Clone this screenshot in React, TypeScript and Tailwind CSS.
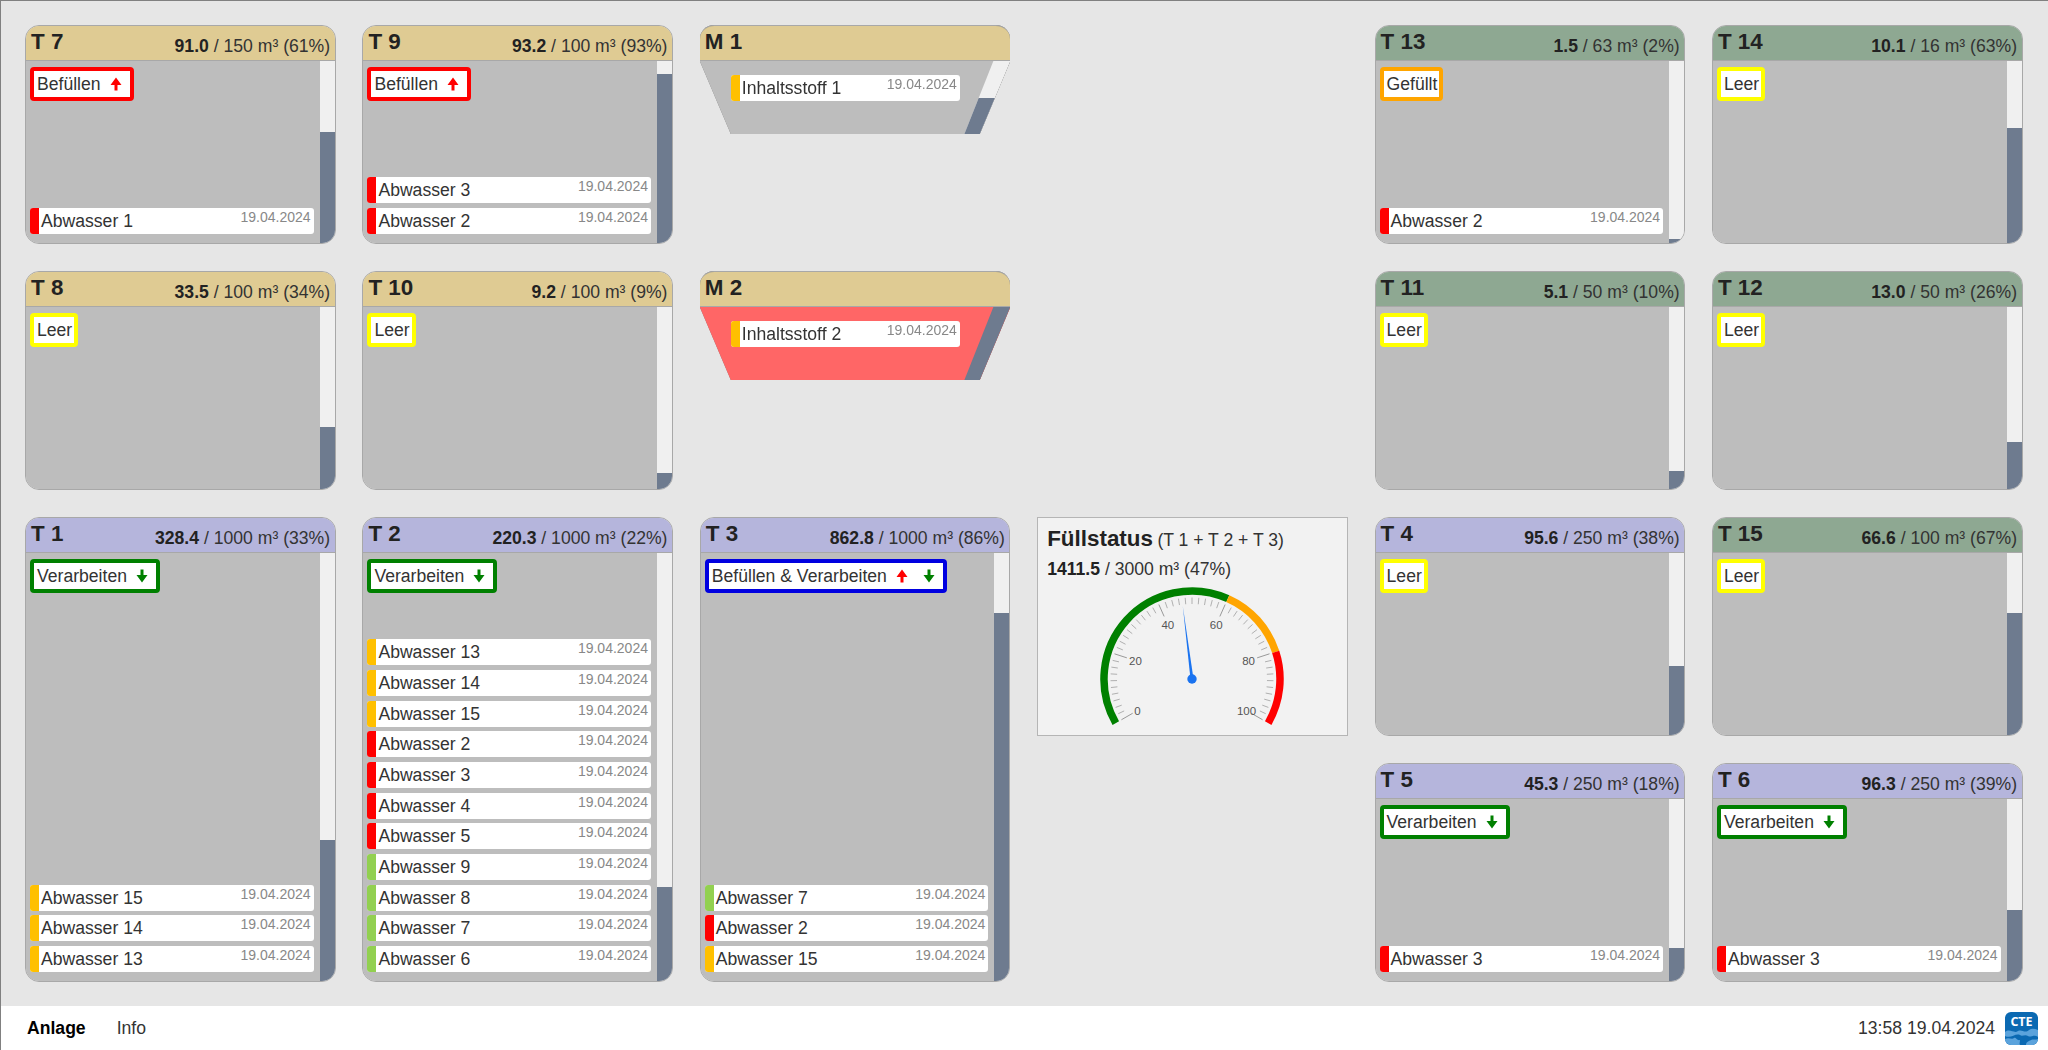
import type { ReactNode } from 'react';

const RED = 'bg-[#ff0000]';
const ORANGE = 'bg-[#ffc000]';
const GREEN = 'bg-[#92d050]';

type Item = { name: string; color: string };

type Tank = {
  name: string;
  value: string;
  max: number;
  percent: number;
  head: string;
  place: string;
  status: string;
  border: string;
  up?: boolean;
  down?: boolean;
  items?: Item[];
};

const HEAD_TAN = 'bg-[#dfcb93]';
const HEAD_GREEN = 'bg-[#8ea892]';
const HEAD_PURPLE = 'bg-[#b5b5dc]';

const BORDER_RED = 'border-[#ff0000]';
const BORDER_YELLOW = 'border-[#ffff00]';
const BORDER_GREEN = 'border-[#008000]';
const BORDER_BLUE = 'border-[#0000e0]';
const BORDER_ORANGE = 'border-[#ffa500]';

const tanks: Tank[] = [
  { name: 'T 7', value: '91.0', max: 150, percent: 61, head: HEAD_TAN, place: 'col-start-1 row-start-1', status: 'Befüllen', border: BORDER_RED, up: true, items: [{ name: 'Abwasser 1', color: RED }] },
  { name: 'T 9', value: '93.2', max: 100, percent: 93, head: HEAD_TAN, place: 'col-start-2 row-start-1', status: 'Befüllen', border: BORDER_RED, up: true, items: [{ name: 'Abwasser 3', color: RED }, { name: 'Abwasser 2', color: RED }] },
  { name: 'T 13', value: '1.5', max: 63, percent: 2, head: HEAD_GREEN, place: 'col-start-5 row-start-1', status: 'Gefüllt', border: BORDER_ORANGE, items: [{ name: 'Abwasser 2', color: RED }] },
  { name: 'T 14', value: '10.1', max: 16, percent: 63, head: HEAD_GREEN, place: 'col-start-6 row-start-1', status: 'Leer', border: BORDER_YELLOW },
  { name: 'T 8', value: '33.5', max: 100, percent: 34, head: HEAD_TAN, place: 'col-start-1 row-start-2', status: 'Leer', border: BORDER_YELLOW },
  { name: 'T 10', value: '9.2', max: 100, percent: 9, head: HEAD_TAN, place: 'col-start-2 row-start-2', status: 'Leer', border: BORDER_YELLOW },
  { name: 'T 11', value: '5.1', max: 50, percent: 10, head: HEAD_GREEN, place: 'col-start-5 row-start-2', status: 'Leer', border: BORDER_YELLOW },
  { name: 'T 12', value: '13.0', max: 50, percent: 26, head: HEAD_GREEN, place: 'col-start-6 row-start-2', status: 'Leer', border: BORDER_YELLOW },
  { name: 'T 1', value: '328.4', max: 1000, percent: 33, head: HEAD_PURPLE, place: 'col-start-1 row-start-3 row-span-2', status: 'Verarbeiten', border: BORDER_GREEN, down: true, items: [{ name: 'Abwasser 15', color: ORANGE }, { name: 'Abwasser 14', color: ORANGE }, { name: 'Abwasser 13', color: ORANGE }] },
  {
    name: 'T 2', value: '220.3', max: 1000, percent: 22, head: HEAD_PURPLE, place: 'col-start-2 row-start-3 row-span-2', status: 'Verarbeiten', border: BORDER_GREEN, down: true,
    items: [
      { name: 'Abwasser 13', color: ORANGE },
      { name: 'Abwasser 14', color: ORANGE },
      { name: 'Abwasser 15', color: ORANGE },
      { name: 'Abwasser 2', color: RED },
      { name: 'Abwasser 3', color: RED },
      { name: 'Abwasser 4', color: RED },
      { name: 'Abwasser 5', color: RED },
      { name: 'Abwasser 9', color: GREEN },
      { name: 'Abwasser 8', color: GREEN },
      { name: 'Abwasser 7', color: GREEN },
      { name: 'Abwasser 6', color: GREEN },
    ],
  },
  { name: 'T 3', value: '862.8', max: 1000, percent: 86, head: HEAD_PURPLE, place: 'col-start-3 row-start-3 row-span-2', status: 'Befüllen & Verarbeiten', border: BORDER_BLUE, up: true, down: true, items: [{ name: 'Abwasser 7', color: GREEN }, { name: 'Abwasser 2', color: RED }, { name: 'Abwasser 15', color: ORANGE }] },
  { name: 'T 4', value: '95.6', max: 250, percent: 38, head: HEAD_PURPLE, place: 'col-start-5 row-start-3', status: 'Leer', border: BORDER_YELLOW },
  { name: 'T 15', value: '66.6', max: 100, percent: 67, head: HEAD_GREEN, place: 'col-start-6 row-start-3', status: 'Leer', border: BORDER_YELLOW },
  { name: 'T 5', value: '45.3', max: 250, percent: 18, head: HEAD_PURPLE, place: 'col-start-5 row-start-4', status: 'Verarbeiten', border: BORDER_GREEN, down: true, items: [{ name: 'Abwasser 3', color: RED }] },
  { name: 'T 6', value: '96.3', max: 250, percent: 39, head: HEAD_PURPLE, place: 'col-start-6 row-start-4', status: 'Verarbeiten', border: BORDER_GREEN, down: true, items: [{ name: 'Abwasser 3', color: RED }] },
];

function Arrow({ dir, className = '' }: { dir: 'up' | 'down'; className?: string }) {
  return (
    <svg width="12" height="14" viewBox="0 0 12 14" className={`${dir === 'down' ? 'rotate-180' : ''} ${className}`}>
      <path d="M6 0.5 L11.5 8 H7.5 V13.5 H4.5 V8 H0.5 Z" fill={dir === 'up' ? '#ff0000' : '#008000'} />
    </svg>
  );
}

function ItemRow({ item, full }: { item: Item; full?: boolean }) {
  return (
    <div className={`flex h-[26px] shrink-0 overflow-hidden rounded-[3px] bg-white ${full ? 'w-[229px]' : ''}`}>
      <div className={`w-[9px] shrink-0 ${item.color}`} />
      <span className="ml-[2px] flex-1 text-[17.6px] leading-[26px] text-[#333]">{item.name}</span>
      <span className="mr-[3px] text-[14px] leading-[19px] text-[#888]">19.04.2024</span>
    </div>
  );
}

function Head({ title, head, children }: { title: string; head: string; children?: ReactNode }) {
  return (
    <div className={`flex h-[35px] shrink-0 items-start justify-between border-b border-b-[#a8a8a8] pl-[5px] pr-[4.5px] ${head}`}>
      <span className="text-[22.4px] font-bold leading-[32px] text-[#222]">{title}</span>
      {children}
    </div>
  );
}

function TankCard({ tank }: { tank: Tank }) {
  return (
    <div className={`flex flex-col overflow-hidden rounded-[14px] border border-[#a8a8a8] ${tank.place}`}>
      <Head title={tank.name} head={tank.head}>
        <span className="mt-[8px] text-[17.6px] leading-[24px] text-[#333]">
          <b className="text-[#222]">{tank.value}</b> / {tank.max} m³ ({tank.percent}%)
        </span>
      </Head>
      <div className="flex min-h-0 flex-1 bg-[#bdbdbd]">
        <div className="flex min-w-0 flex-1 flex-col justify-between pb-[9px] pl-[4px] pr-[6px] pt-[6px]">
          <div className={`flex h-[34px] items-center gap-[9px] self-start rounded-[4px] border-[4px] bg-white pl-[3px] text-[17.6px] text-[#333] ${tank.up || tank.down ? 'pr-[8px]' : 'pr-[2px]'} ${tank.border}`}>
            <span>{tank.status}</span>
            {tank.up && <Arrow dir="up" />}
            {tank.down && <Arrow dir="down" className={tank.up ? 'ml-[6px]' : ''} />}
          </div>
          <div className="flex flex-col gap-[4.7px]">
            {tank.items?.map((item) => <ItemRow key={item.name} item={item} />)}
          </div>
        </div>
        <div className="flex w-[15px] shrink-0 flex-col bg-[#f0f0f0]">
          <div className="mt-auto bg-[#6e7b8f]" style={{ height: `${tank.percent}%` }} />
        </div>
      </div>
    </div>
  );
}

function Mixer({ name, place, body, item, fill }: { name: string; place: string; body: string; item: string; fill: number }) {
  return (
    <div className={`flex flex-col self-start drop-shadow-[0_0_0.5px_#777] ${place}`}>
      <div className="overflow-hidden rounded-t-[14px] border-t border-t-[#a8a8a8]">
        <Head title={name} head={HEAD_TAN} />
      </div>
      <div className={`flex h-[73px] pl-[31px] [clip-path:polygon(0_0,100%_0,280px_100%,31px_100%)] ${body}`}>
        <div className="flex-1 pt-[14px]">
          <ItemRow item={{ name: item, color: ORANGE }} full />
        </div>
        <div className="flex w-[46px] shrink-0 flex-col bg-[#f0f0f0] [clip-path:polygon(29px_0,46px_0,16px_100%,0_100%)]">
          <div className="mt-auto bg-[#6e7b8f]" style={{ height: `${fill}%` }} />
        </div>
      </div>
    </div>
  );
}

// value 0..100 maps onto 240 degrees, 0 sits lower left
function polar(value: number, r: number) {
  const a = ((value * 2.4 - 120) * Math.PI) / 180;
  return { x: 100 + r * Math.sin(a), y: 94 - r * Math.cos(a) };
}

function arc(from: number, to: number, r: number) {
  const a = polar(from, r);
  const b = polar(to, r);
  const large = (to - from) * 2.4 > 180 ? 1 : 0;
  return `M${a.x} ${a.y} A${r} ${r} 0 ${large} 1 ${b.x} ${b.y}`;
}

function Gauge({ value }: { value: number }) {
  const ticks = Array.from({ length: 51 }, (_, i) => i * 2);
  const tip = polar(value, 73);
  const a = ((value * 2.4 - 120) * Math.PI) / 180;
  const nx = Math.cos(a) * 1.5;
  const ny = Math.sin(a) * 1.5;
  return (
    <svg width="200" height="150" viewBox="0 0 200 150" className="mx-auto mt-[4px] block">
      <path d={arc(0, 60, 88)} fill="none" stroke="#008000" strokeWidth="7.5" />
      <path d={arc(60, 80, 88)} fill="none" stroke="#ffa500" strokeWidth="7.5" />
      <path d={arc(80, 100, 88)} fill="none" stroke="#ff0000" strokeWidth="7.5" />
      {ticks.map((t) => {
        const major = t % 20 === 0;
        const p = polar(t, 81.5);
        const q = polar(t, major ? 68.5 : 75);
        return <line key={t} x1={p.x} y1={p.y} x2={q.x} y2={q.y} stroke={major ? '#999' : '#b0b0b0'} strokeWidth="1" />;
      })}
      {[0, 20, 40, 60, 80, 100].map((t) => {
        const p = polar(t, t === 0 || t === 100 ? 63 : 59.5);
        return (
          <text key={t} x={p.x} y={p.y + 4} textAnchor="middle" fontSize="11.5" fill="#555" fontFamily="'Liberation Sans', Arial, sans-serif">
            {t}
          </text>
        );
      })}
      <polygon points={`${100 - nx},${94 - ny} ${100 + nx},${94 + ny} ${tip.x},${tip.y}`} fill="#1a73f0" />
      <circle cx="100" cy="94" r="4.7" fill="#1a73f0" />
    </svg>
  );
}

function Logo() {
  return (
    <svg width="33" height="33" viewBox="0 0 33 33" className="shrink-0">
      <rect width="33" height="33" rx="6" fill="#0b69b2" />
      <path d="M0 20 C5 16 9 22 13 19 C17 17 20 22 24 18 C27 16 30 17 33 18 V25 C28 22 26 26 23 24 C20 22 17 25 15 23 C10 21 6 27 0 24 Z" fill="#5ba3dc" />
      <path d="M0 27 C4 25 7 28 9 26 C11 25 12 29 15 28 C15 30 14 32 15 33 H6 A6 6 0 0 1 0 27 Z" fill="#5ba3dc" />
      <path d="M21 33 C21 30 24 29 26 28 C29 27 31 28 33 27 A6 6 0 0 1 27 33 Z" fill="#5ba3dc" />
      <text x="16.5" y="14" textAnchor="middle" fontSize="12.5" fontWeight="700" fill="#fff" fontFamily="'Open Sans', sans-serif">
        CTE
      </text>
    </svg>
  );
}

export default function App() {
  return (
    <div className="flex h-[1050px] w-[2048px] flex-col overflow-hidden border-l border-t border-[#808080] bg-white font-['Liberation_Sans',Arial,sans-serif]">
      <main className="h-[1005px] shrink-0 bg-[#e6e6e6] pl-[24px] pt-[24px]">
        <div className="grid grid-cols-[repeat(6,310.6px)] grid-rows-[repeat(4,219px)] gap-x-[26.8px] gap-y-[27px]">
          {tanks.map((t) => <TankCard key={t.name} tank={t} />)}
          <Mixer name="M 1" place="col-start-3 row-start-1" body="bg-[#bdbdbd]" item="Inhaltsstoff 1" fill={50} />
          <Mixer name="M 2" place="col-start-3 row-start-2" body="bg-[#ff6666]" item="Inhaltsstoff 2" fill={100} />
          <div className="col-start-4 row-start-3 border border-[#b5b5b5] bg-[#f2f2f2] px-[9px] pt-[7px] text-[#333]">
            <div className="leading-[28px]">
              <b className="text-[22.4px] text-[#222]">Füllstatus</b> <span className="text-[17.6px]">(T 1 + T 2 + T 3)</span>
            </div>
            <div className="mt-[2px] text-[17.6px] leading-[24px]">
              <b className="text-[#222]">1411.5</b> / 3000 m³ (47%)
            </div>
            <Gauge value={47} />
          </div>
        </div>
      </main>
      <footer className="flex flex-1 items-center bg-white pl-[26px] pr-[10px] text-[17.6px] text-[#333]">
        <b className="text-black">Anlage</b>
        <span className="ml-[31px]">Info</span>
        <span className="ml-auto mr-[10px]">13:58 19.04.2024</span>
        <Logo />
      </footer>
    </div>
  );
}
